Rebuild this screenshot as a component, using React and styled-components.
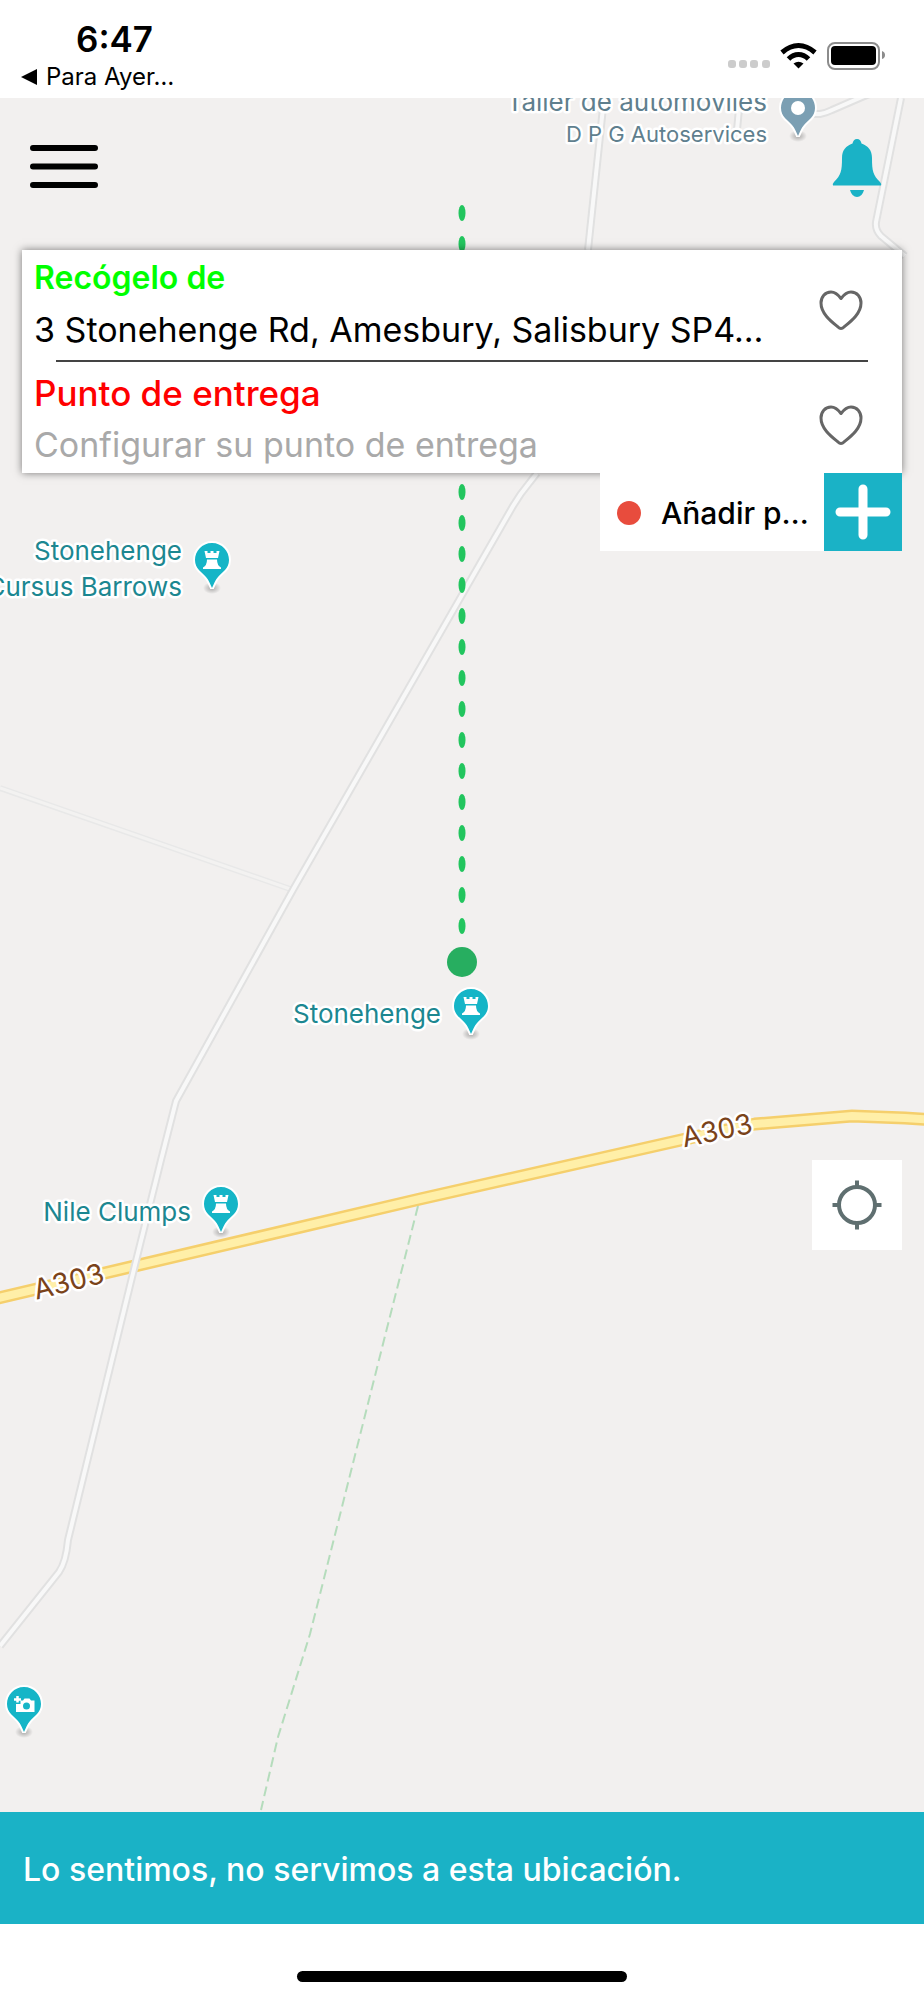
import React from 'react';
import styled, { createGlobalStyle } from 'styled-components';

const GlobalStyle = createGlobalStyle`
	* {
		box-sizing: border-box;
	}
	body {
		margin: 0;
		background-color: #fff;
		font-family: Inter, 'Liberation Sans', sans-serif;
		color: #000;
	}
	button, input {
		font-family: inherit;
	}
`;

const Screen = styled.div`
	display: flex;
	flex-direction: column;
	min-height: 100vh;
`;

const StatusBar = styled.header`
	display: flex;
	justify-content: space-between;
	height: 98px;
	padding: 18px 38px 0 20px;
`;

const StatusLeft = styled.div`
	display: flex;
	flex-direction: column;
`;

const Time = styled.time`
	padding-left: 56px;
	font-size: 35px;
	font-weight: 600;
	line-height: 42px;
`;

const BackLink = styled.a`
	display: flex;
	align-items: center;
	gap: 9px;
	font-size: 24px;
	line-height: 34px;
	color: #000;
	text-decoration: none;
`;

const StatusIcons = styled.div`
	display: flex;
	align-items: flex-end;
	gap: 10px;
	height: 52px;
`;

const MapArea = styled.main`
	display: grid;
	flex: 1;
	overflow: hidden;
	background-color: #f2f0ef;
	> * {
		grid-area: 1 / 1;
		min-width: 0;
	}
`;

const MapSvg = styled.svg`
	display: block;
	width: 100%;
	height: 100%;
	text {
		font-family: Inter, 'Liberation Sans', sans-serif;
		paint-order: stroke;
		stroke: #fff;
		stroke-width: 5px;
		stroke-linejoin: round;
	}
`;

const Overlay = styled.div`
	position: relative;
	display: flex;
	flex-direction: column;
	padding: 0 22px 562px;
`;

const Toolbar = styled.nav`
	display: flex;
	justify-content: space-between;
	align-items: flex-start;
	height: 152px;
	padding: 40px 20px 0 8px;
`;

const IconButton = styled.button`
	display: flex;
	flex-shrink: 0;
	padding: 0;
	border: 0;
	background: none;
	cursor: pointer;
`;

const Card = styled.section`
	position: relative;
	padding: 0 34px 0 12px;
	background-color: #fff;
	box-shadow: 0 0 8px rgba(0, 0, 0, .5);
`;

const Field = styled.div`
	display: flex;
	align-items: flex-start;
	justify-content: space-between;
	height: 111px;
	padding: ${({ $top }) => $top}px 5px 0 0;
`;

const FieldText = styled.div`
	display: flex;
	flex: 1;
	flex-direction: column;
	min-width: 0;
`;

const FieldLabel = styled.label`
	font-size: ${({ $size }) => $size}px;
	font-weight: ${({ $weight }) => $weight};
	line-height: 50px;
	color: ${({ $color }) => $color};
`;

const FieldInput = styled.input`
	width: 100%;
	height: 52px;
	padding: 0;
	border: 0;
	background: none;
	font-size: 34px;
	color: #000;
	outline: none;
	text-overflow: ellipsis;
	&::placeholder {
		color: #a9a9a9;
		opacity: 1;
	}
`;

const HeartButton = styled(IconButton)`
	margin-top: 37px;
`;

const Divider = styled.hr`
	height: 2px;
	margin: -1px 0 0 22px;
	border: 0;
	background-color: #444;
`;

const StopRow = styled.div`
	position: relative;
	display: flex;
	align-self: flex-end;
	height: 78px;
	background-color: #fff;
`;

const StopText = styled.span`
	display: flex;
	align-items: center;
	gap: 20px;
	width: 224px;
	padding: 1px 0 0 17px;
	font-size: 30px;
	font-weight: 500;
	white-space: nowrap;
`;

const RedDot = styled.i`
	width: 24px;
	height: 24px;
	border-radius: 50%;
	background-color: #e84c3d;
`;

const AddButton = styled(IconButton)`
	align-items: center;
	justify-content: center;
	width: 78px;
	background-color: #1ab2c6;
`;

const LocateButton = styled(IconButton)`
	align-items: center;
	align-self: flex-end;
	justify-content: center;
	width: 90px;
	height: 90px;
	margin-top: auto;
	background-color: #fff;
`;

const Banner = styled.p`
	display: flex;
	align-items: center;
	min-height: 112px;
	margin: 0;
	padding: 3px 23px 0;
	background-color: #1ab2c6;
	font-size: 32px;
	font-weight: 500;
	color: #fff;
`;

const Footer = styled.footer`
	display: flex;
	justify-content: center;
	height: 76px;
	padding-top: 47px;
`;

const HomeBar = styled.div`
	width: 330px;
	height: 11px;
	border-radius: 6px;
	background-color: #000;
`;

const minorRoads = [
	'M537 473 L530 482 Q520 494 513 506 L294 888 L176 1101 L161 1160 L135 1265 L68 1540 Q66 1562 59 1572 L0 1646',
	'M604 98 L588 250',
	'M901 98 L876 222 Q875 230 881 236 L905 256',
	'M740 98 L737 130',
	'M805 114 L820 114 Q826 113 832 110 L862 97 L880 90'
];

const A303 = 'M-10 1300 L420 1199 L690 1138 Q725 1130 755 1124 L852 1116 L905 1118 L934 1120';

const places = [
	{ x: 212, y: 543, icon: 'rook', lines: ['Stonehenge', 'Cursus Barrows'] },
	{ x: 471, y: 989, icon: 'rook', lines: ['Stonehenge'] },
	{ x: 221, y: 1187, icon: 'rook', lines: ['Nile Clumps'] },
	{ x: 24, y: 1687, icon: 'camera', lines: [] }
];

const routeDots = Array.from({ length: 24 }, (_, i) => 213 + i * 31);

const Rook = () => (
	<path
		fill="#fff"
		d="M-7.500 -9 h3 v2 h3 v-2 h3 v2 h3 v-2 h3 l-1.500 7 h-12 z M-5 -0.500 h10 q0 6 4 8 v1.500 h-18 v-1.500 q4 -2 4 -8 z"
	/>
);

const Camera = () => (
	<>
		<path fill="#fff" d="M-8 0 h4.500 v-3.500 h2.500 l1.500 -2 h5 l1.500 2 h3.500 v11.500 h-18.500 z" />
		<path stroke="#fff" strokeWidth="2.500" d="M-6.500 -8 v6.500 M-10 -4.500 h7" />
		<circle cx="2.500" cy="2" r="3.500" fill="#15b5c7" />
	</>
);

const Pin = ({ x, y, icon, color = '#15b5c7' }) => (
	<g transform={`translate(${x} ${y + 17})`}>
		<ellipse cx="0" cy="28" rx="9" ry="6" fill="url(#pin-shadow)" />
		<path
			d="M0 -17 C10 -17 17 -9 17 0 C17 9 10 12 6 17 C3 20 2 24 0 28 C-2 24 -3 20 -6 17 C-10 12 -17 9 -17 0 C-17 -9 -10 -17 0 -17 Z"
			fill={color}
			stroke="#fff"
			strokeWidth="4"
			strokeLinejoin="bevel"
			paintOrder="stroke"
		/>
		{icon === 'rook' && <Rook />}
		{icon === 'camera' && <Camera />}
		{!icon && <circle r="7" fill="#fff" />}
	</g>
);

const StreetMap = () => (
	<MapSvg viewBox="0 98 924 1714" preserveAspectRatio="xMidYMid slice" role="img" aria-label="Mapa">
		<defs>
			<radialGradient id="pin-shadow">
				<stop offset="0" stopColor="#000" stopOpacity=".3" />
				<stop offset="1" stopColor="#000" stopOpacity="0" />
			</radialGradient>
		</defs>
		<path d="M0 788 L293 890" fill="none" stroke="#e8e8e8" strokeWidth="6" />
		<path d="M0 788 L293 890" fill="none" stroke="#f3f2f1" strokeWidth="3" />
		<path d={A303} fill="none" stroke="#f5cf6c" strokeWidth="13" />
		<path d={A303} fill="none" stroke="#ffefa8" strokeWidth="8" />
		{minorRoads.map((d) => (
			<g key={d} fill="none" strokeLinejoin="round">
				<path d={d} stroke="#e1e1e1" strokeWidth="8" />
				<path d={d} stroke="#f8f8f8" strokeWidth="4" />
			</g>
		))}
		<path
			d="M418 1206 L384 1340 L310 1634 L278 1737 L261 1810"
			fill="none"
			stroke="#b5dcbc"
			strokeWidth="2"
			strokeDasharray="10 5"
		/>

		<g fontSize="28" fill="#7a431a" textAnchor="middle">
			<text transform="translate(71 1291) rotate(-14)">A303</text>
			<text transform="translate(719 1140) rotate(-12)">A303</text>
		</g>

		<g fill="#5f7f8e" textAnchor="end">
			<text x="767" y="111" fontSize="26">Taller de automóviles</text>
			<text x="767" y="142" fontSize="22">D P G Autoservices</text>
		</g>
		<Pin x={798} y={91} color="#7b9fb3" />

		{places.map(({ x, y, icon, lines }) => (
			<g key={`${x}-${y}`}>
				<Pin x={x} y={y} icon={icon} />
				{lines.map((line, i) => (
					<text
						key={line}
						x={x - 30}
						y={y + (lines.length > 1 ? 17 : 34) + i * 36}
						fontSize="26"
						fill="#1c8791"
						textAnchor="end"
					>
						{line}
					</text>
				))}
			</g>
		))}

		{routeDots.map((y) => (
			<ellipse key={y} cx="462" cy={y} rx="3.500" ry="8" fill="#22c55e" />
		))}
		<circle cx="462" cy="962" r="15" fill="#27ae60" />
	</MapSvg>
);

const Heart = () => (
	<svg width="44" height="42" viewBox="0 0 44 42" fill="none" stroke="#666" strokeWidth="3" strokeLinejoin="round">
		<path d="M22 8.500 C19 4.500 16 2 12 2 C6 2 2 7 2 13 C2 24 13 32 19 37 C21 39 23 39 25 37 C31 32 42 24 42 13 C42 7 38 2 32 2 C28 2 25 4.500 22 8.500 Z" />
	</svg>
);

const AddressField = ({ id, label, labelColor, size, weight, top, ...input }) => (
	<Field $top={top}>
		<FieldText>
			<FieldLabel htmlFor={id} $color={labelColor} $size={size} $weight={weight}>{label}</FieldLabel>
			<FieldInput id={id} type="text" {...input} />
		</FieldText>
		<HeartButton type="button" aria-label="Favorito">
			<Heart />
		</HeartButton>
	</Field>
);

export default function App() {
	return (
		<Screen>
			<GlobalStyle />
			<StatusBar>
				<StatusLeft>
					<Time>6:47</Time>
					<BackLink href="#back">
						<svg width="17" height="16" viewBox="0 0 17 16">
							<path d="M1 8 L17 0 V16 Z" />
						</svg>
						Para Ayer…
					</BackLink>
				</StatusLeft>
				<StatusIcons>
					<svg width="42" height="10" viewBox="0 0 42 10" fill="#ccc">
						<rect x="0" y="0" width="8" height="8" rx="3" />
						<rect x="11" y="0" width="8" height="8" rx="3" />
						<rect x="22" y="0" width="8" height="8" rx="3" />
						<rect x="34" y="0" width="8" height="8" rx="3" />
					</svg>
					<svg width="37" height="27" viewBox="0 0 37 27" fill="none" stroke="#000" strokeWidth="5">
						<path d="M2 9.500 Q10 2.500 18.500 2.500 Q27 2.500 35 9.500" />
						<path d="M8.500 16 Q13 11.500 18.500 11.500 Q24 11.500 28.500 16" />
						<path d="M13.500 20.500 Q18.500 17 23.500 20.500 L18.500 25.500 Z" fill="#000" stroke="none" />
					</svg>
					<svg width="59" height="28" viewBox="0 0 59 28">
						<rect x="1" y="1" width="51" height="26" rx="7" fill="none" stroke="#8c8c8c" strokeWidth="2" />
						<rect x="4" y="4" width="45" height="19" rx="4" />
						<path d="M55 9 Q58 10 58 13 Q58 16 55 17 Z" fill="#8c8c8c" />
					</svg>
				</StatusIcons>
			</StatusBar>
			<MapArea>
				<StreetMap />
				<Overlay>
					<Toolbar>
						<IconButton type="button" aria-label="Menú">
							<svg width="68" height="56" viewBox="0 0 68 56" stroke="#000" strokeWidth="6" strokeLinecap="round">
								<path d="M3 10 H65 M3 28.500 H65 M3 47 H65" />
							</svg>
						</IconButton>
						<IconButton type="button" aria-label="Notificaciones">
							<svg width="50" height="59" viewBox="0 0 50 59" fill="#1ab2c6">
								<path d="M25 1 C27.500 1 29 3 29.500 5.500 C36 8 40 12 40 20 C40 33 41 37 48 44 Q50 46 49 47.500 H1 Q0 46 2 44 C9 37 10 33 10 20 C10 12 14 8 20.500 5.500 C21 3 22.500 1 25 1 Z" />
								<path d="M18 52 H32 Q30 59 25 59 Q20 59 18 52 Z" />
							</svg>
						</IconButton>
					</Toolbar>
					<Card>
						<AddressField
							id="pickup"
							label="Recógelo de"
							labelColor="#00ff00"
							size={32}
							weight={600}
							top={3}
							defaultValue="3 Stonehenge Rd, Amesbury, Salisbury SP4…"
						/>
						<Divider />
						<AddressField
							id="dropoff"
							label="Punto de entrega"
							labelColor="#ff0000"
							size={35}
							weight={500}
							top={6}
							placeholder="Configurar su punto de entrega"
						/>
					</Card>
					<StopRow>
						<StopText>
							<RedDot />
							Añadir p…
						</StopText>
						<AddButton type="button" aria-label="Añadir parada">
							<svg width="58" height="58" viewBox="0 0 58 58" stroke="#fff" strokeWidth="9" strokeLinecap="round">
								<path d="M29 6 V52 M6 29 H52" />
							</svg>
						</AddButton>
					</StopRow>
					<LocateButton type="button" aria-label="Mi ubicación">
						<svg width="50" height="50" viewBox="0 0 50 50" fill="none" stroke="#5f6f70" strokeWidth="4">
							<circle cx="25" cy="25" r="18" />
							<path d="M25 0.500 V6 M25 44 V49.500 M0.500 25 H6 M44 25 H49.500" />
						</svg>
					</LocateButton>
				</Overlay>
			</MapArea>
			<Banner role="status">Lo sentimos, no servimos a esta ubicación.</Banner>
			<Footer>
				<HomeBar />
			</Footer>
		</Screen>
	);
}
